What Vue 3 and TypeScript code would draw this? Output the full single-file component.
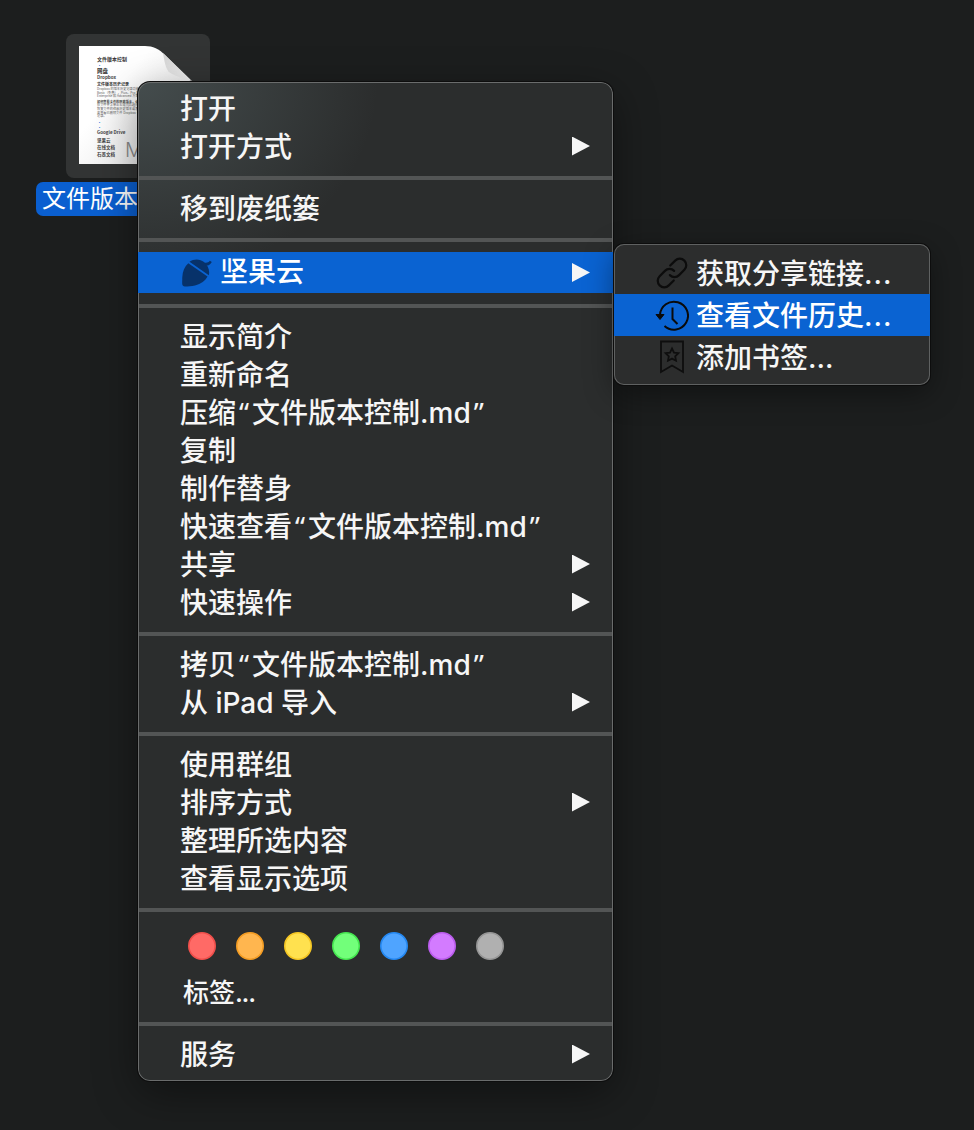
<script setup lang="ts">
interface Row { label: string; arrow?: boolean }
const groupsTop: Row[][] = [
  [{ label: '打开' }, { label: '打开方式', arrow: true }],
  [{ label: '移到废纸篓' }],
]
const groupsBottom: Row[][] = [
  [
    { label: '显示简介' },
    { label: '重新命名' },
    { label: '压缩“文件版本控制.md”' },
    { label: '复制' },
    { label: '制作替身' },
    { label: '快速查看“文件版本控制.md”' },
    { label: '共享', arrow: true },
    { label: '快速操作', arrow: true },
  ],
  [{ label: '拷贝“文件版本控制.md”' }, { label: '从 iPad 导入', arrow: true }],
  [
    { label: '使用群组' },
    { label: '排序方式', arrow: true },
    { label: '整理所选内容' },
    { label: '查看显示选项' },
  ],
]
const tags = [
  { fill: '#ff6a66', edge: '#f04f4b' },
  { fill: '#ffb64f', edge: '#f59d23' },
  { fill: '#ffe14f', edge: '#f5c623' },
  { fill: '#72ff7a', edge: '#45e650' },
  { fill: '#4fa4ff', edge: '#2488f2' },
  { fill: '#d37bff', edge: '#bb5cee' },
  { fill: '#b0b0b0', edge: '#959595' },
]
const parts = (label: string): string[] => label.split(/([“”])/).filter((p) => p !== '')
const isQuote = (p: string): boolean => p === '“' || p === '”'
</script>

<template>
  <div class="desktop">
    <div class="file">
      <div class="tile">
        <div class="page">
          <svg class="sheet" width="114" height="118" viewBox="0 0 114 118">
            <defs>
              <linearGradient id="foldShade" x1="0" y1="0" x2="1" y2="1">
                <stop offset="0" stop-color="#d4d4d4" />
                <stop offset="1" stop-color="#f6f6f6" />
              </linearGradient>
              <linearGradient id="pageShade" x1="0.3" y1="0.4" x2="1" y2="1">
                <stop offset="0" stop-color="#ffffff" />
                <stop offset="1" stop-color="#dedede" />
              </linearGradient>
            </defs>
            <path d="M0 0H66C74 0 80 3 86 9L108 31C112 35 113 38 113 42V118H0Z" fill="url(#pageShade)" />
            <path d="M84 7C86 20 88 24 90 26C94 29 102 32 113 35Z" fill="url(#foldShade)" />
          </svg>
          <div class="doc">
            <div class="d-h1">文件版本控制</div>
            <div class="d-dot">•</div>
            <div class="d-h2">网盘</div>
            <div class="d-h3">Dropbox</div>
            <div class="d-h4">文件版本历史记录</div>
            <div class="d-p">Dropbox 的版本历史记录功能会保存文件的</div>
            <div class="d-p">Basic（免费）、Plus、Pro 和 Business</div>
            <div class="d-p">Enterprise 和 Advanced 方案保留更久</div>
            <div class="d-gap d-p d-b">如何查看文件的历史版本，请参阅帮助文档</div>
            <div class="d-p">在文件夹上单击右键然后选择版本历史记录</div>
            <div class="d-p">恢复文件的任意历史版本或者下载需要内容</div>
            <div class="d-p">要查看已删除文件 Dropbox 也可以恢复</div>
            <div class="d-p">记录。</div>
            <div class="d-dot d-dot2">•</div>
            <div class="d-dot">•</div>
            <div class="d-h3 d-gd">Google Drive</div>
            <div class="d-li">坚果云</div>
            <div class="d-li">在线文档</div>
            <div class="d-li">石墨文档</div>
          </div>
          <span class="ext">M</span>
        </div>
      </div>
      <div class="name">文件版本</div>
    </div>

    <div class="menu">
      <template v-for="(group, g) in groupsTop" :key="'t' + g">
        <div v-if="g > 0" class="sep"></div>
        <div v-for="row in group" :key="row.label" class="row">
          <span class="text">{{ row.label }}</span>
          <i v-if="row.arrow" class="arrow"></i>
        </div>
      </template>
      <div class="sep sep-before-active"></div>
      <div class="row row-active">
        <svg class="acorn" width="30" height="28" viewBox="0 0 30 28" fill="#07326a">
          <path d="M6.300 4.200C2.500 7.500 .600 12.500 .300 18C.200 21 .200 23.500 .200 24.800C.200 26.300 1.200 27.500 3 27.500C6 27.500 9.500 27.300 13 26.500C19 25.100 23.300 21.800 25.500 17.600Z" />
          <path d="M7.500 2.800C12-.500 18-.300 22 3C26 6.200 28 11.500 26.800 16.200Z" />
          <path d="M22.500 3.500C24 4.100 26.500 3.800 27.800 1.800L29.800 3C28.300 5.800 25.800 7 23.800 6.500Z" />
        </svg>
        <span class="nut-label">坚果云</span>
        <i class="arrow"></i>
      </div>
      <div class="sep"></div>
      <template v-for="(group, g) in groupsBottom" :key="'b' + g">
        <div v-if="g > 0" class="sep"></div>
        <div v-for="row in group" :key="row.label" class="row">
          <span class="text"><template v-for="(p, i) in parts(row.label)" :key="i"><span v-if="isQuote(p)" class="quote">{{ p }}</span><template v-else>{{ p }}</template></template></span>
          <i v-if="row.arrow" class="arrow"></i>
        </div>
      </template>
      <div class="sep"></div>
      <div class="tags">
        <div class="dots">
          <svg v-for="t in tags" :key="t.fill" width="28" height="28" viewBox="0 0 28 28">
            <circle cx="14" cy="14" r="13.200" :fill="t.fill" :stroke="t.edge" stroke-width="1.600" />
          </svg>
        </div>
        <div class="tag-label">标签<span class="tag-ell">...</span></div>
      </div>
      <div class="sep"></div>
      <div class="row">
        <span class="text">服务</span>
        <i class="arrow"></i>
      </div>
    </div>

    <div class="submenu">
      <div class="subrow">
        <svg width="34" height="34" viewBox="0 0 34 34" fill="none" stroke="#0c0c0c" stroke-width="2.200" stroke-linecap="round">
          <g transform="rotate(-45 17 17)">
            <path d="M13 23.500H6A6.500 6.500 0 0 1 6 10.500H13.500A6.500 6.500 0 0 1 20 17" />
            <path d="M21 10.500H28A6.500 6.500 0 0 1 28 23.500H20.500A6.500 6.500 0 0 1 14 17" />
          </g>
        </svg>
        <span class="subtext">获取分享链接<span class="ell">...</span></span>
      </div>
      <div class="subrow subrow-active">
        <svg width="34" height="34" viewBox="0 0 34 34" fill="none" stroke="#0a0a0a" stroke-width="2">
          <path d="M5 17A14 14 0 1 1 9.500 28" />
          <path d="M1 16.500L9 16.500L5 21.500Z" fill="#0a0a0a" stroke-width="1" stroke-linejoin="round" />
          <path d="M17.500 9.500V21L22.500 26" />
        </svg>
        <span class="subtext">查看文件历史<span class="ell">...</span></span>
      </div>
      <div class="subrow">
        <svg width="34" height="34" viewBox="0 0 34 34" fill="none" stroke="#0e0e0e" stroke-width="1.800">
          <path d="M6 1.500H28V32L17 25.500L6 32Z" />
          <path d="M17 8.500L19 12.600L23.400 13.200L20.200 16.300L21 20.700L17 18.600L13 20.700L13.800 16.300L10.600 13.200L15 12.600Z" />
        </svg>
        <span class="subtext">添加书签<span class="ell-short">...</span></span>
      </div>
    </div>
  </div>
</template>

<style>
html, body { margin: 0; background: #1c1e1e; }
</style>

<style scoped>
.desktop {
  position: relative;
  width: 974px;
  height: 1130px;
  overflow: hidden;
  background: #1c1e1e;
  font-family: Inter, "Noto Sans CJK SC", sans-serif;
  font-weight: 500;
  color: #f6f6f6;
}
.file {
  position: absolute;
  left: 36px;
  top: 34px;
  width: 210px;
}
.tile {
  width: 144px;
  height: 144px;
  margin-left: 30px;
  border-radius: 8px;
  background: #323434;
  padding: 12px 0 0 13px;
  box-sizing: border-box;
}
.page {
  position: relative;
  width: 114px;
  height: 118px;
}
.sheet { position: absolute; left: 0; top: 0; }
.doc {
  position: relative;
  padding: 10px 0 0 18px;
  color: #333;
  font-family: "Noto Sans CJK SC", sans-serif;
  font-weight: 400;
  white-space: nowrap;
  width: 60px;
}
.d-h1 { font-size: 5px; line-height: 6px; font-weight: 700; }
.d-dot { font-size: 5px; line-height: 5px; color: #3a7de0; }
.d-dot2 { margin-top: 0.500px; }
.d-h2 { font-size: 5.500px; line-height: 6px; font-weight: 700; margin-top: 1px; }
.d-h3 { font-size: 4.500px; line-height: 7px; font-weight: 700; color: #444; }
.d-h4 { font-size: 4px; line-height: 6px; font-weight: 700; }
.d-p { font-size: 3.200px; line-height: 3.700px; color: #666; }
.d-b { font-weight: 700; color: #444; }
.d-gap { margin-top: 1.500px; }
.d-gd { margin-top: 0.500px; }
.d-li { font-size: 4.500px; line-height: 6px; margin-top: 1px; font-weight: 700; color: #444; }
.ext {
  position: absolute;
  left: 46px;
  top: 91px;
  font-family: Inter, sans-serif;
  font-size: 20px;
  line-height: 26px;
  font-weight: 300;
  color: #8a8a8a;
}
.name {
  margin-top: 4px;
  height: 34px;
  width: 120px;
  border-radius: 7px;
  background: #0a5fd0;
  padding-left: 6px;
  box-sizing: border-box;
  font-size: 24px;
  font-weight: 400;
  line-height: 34px;
  color: #fff;
  white-space: nowrap;
}
.menu {
  position: absolute;
  left: 138px;
  top: 82px;
  width: 475px;
  height: 999px;
  box-sizing: border-box;
  padding-top: 7px;
  border-radius: 12px;
  overflow: hidden;
  background:
    radial-gradient(ellipse 240px 200px at 0 0, rgba(110, 128, 130, 0.38), rgba(110, 128, 130, 0) 100%),
    #2b2d2d;
  box-shadow: inset 0 0 0 1px #6a6c6c, 0 0 0 1px #0d0d0d, 0 12px 44px rgba(0, 0, 0, 0.42);
  font-size: 28px;
}
.row {
  display: flex;
  align-items: center;
  justify-content: space-between;
  height: 38px;
  padding: 0 23px 0 42px;
  line-height: 38px;
  white-space: nowrap;
}
.text { padding-top: 1px; }
.quote {
  font-family: "Noto Sans", sans-serif;
  font-weight: 400;
  margin: 0 3px;
}
.row-active {
  height: 41px;
  background: #0a63d2;
  justify-content: flex-start;
  color: #fff;
}
.row-active .arrow { margin-left: auto; }
.acorn { flex: none; margin-left: 2px; }
.nut-label { margin-left: 8px; padding-bottom: 1px; }
.arrow {
  flex: none;
  width: 18px;
  height: 19px;
  background: #f6f6f6;
  clip-path: polygon(0 0, 100% 50%, 0 100%);
}
.sep {
  height: 4px;
  margin: 11px 1px 9px;
  background: #535555;
}
.sep-before-active { margin-bottom: 10px; }
.tags {
  height: 90px;
  padding: 11px 0 0 50px;
  box-sizing: border-box;
}
.dots {
  display: flex;
  gap: 20px;
}
.dots svg { display: block; }
.tag-label {
  margin: 14px 0 0 -5px;
  font-size: 26px;
  line-height: 38px;
}
.tag-ell { letter-spacing: -1.300px; }
.submenu {
  position: absolute;
  left: 614px;
  top: 244px;
  width: 316px;
  height: 141px;
  box-sizing: border-box;
  padding-top: 8px;
  border-radius: 10px;
  overflow: hidden;
  background: #2c2d2d;
  box-shadow: inset 0 0 0 1px #5f6161, 0 0 0 1px #0d0d0d, 0 8px 30px rgba(0, 0, 0, 0.4);
  font-size: 28px;
}
.subrow {
  display: flex;
  align-items: center;
  height: 42px;
  padding-left: 41px;
  gap: 7px;
  white-space: nowrap;
}
.subrow svg { flex: none; }
.subtext { padding-bottom: 3px; }
.ell { letter-spacing: 1px; }
.ell-short { letter-spacing: 0; }
.subrow-active {
  background: #0a63d2;
  color: #fff;
}
</style>
